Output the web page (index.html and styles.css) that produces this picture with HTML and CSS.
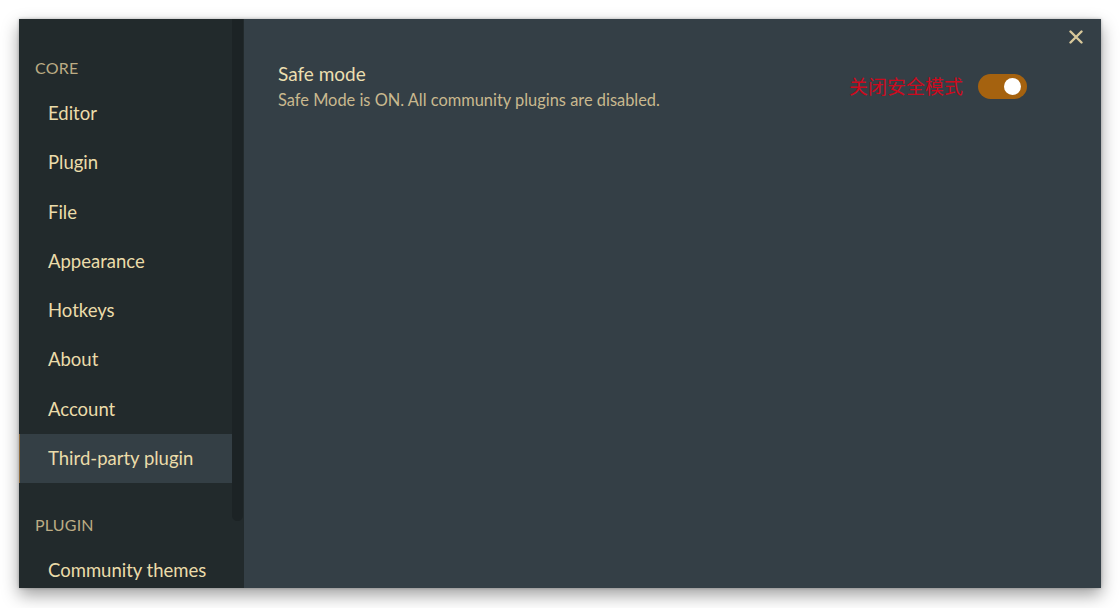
FILE: index.html
```html
<!DOCTYPE html>
<html lang="en">
<head>
<meta charset="utf-8">
<title>Settings</title>
<link rel="stylesheet" href="styles.css">
</head>
<body>
<div class="modal">
  <aside class="sidebar">
    <nav class="nav">
      <div class="nav-heading">CORE</div>
      <div class="nav-item">Editor</div>
      <div class="nav-item">Plugin</div>
      <div class="nav-item">File</div>
      <div class="nav-item">Appearance</div>
      <div class="nav-item">Hotkeys</div>
      <div class="nav-item">About</div>
      <div class="nav-item">Account</div>
      <div class="nav-item is-active">Third-party plugin</div>
      <div class="nav-heading nav-heading-second">PLUGIN</div>
      <div class="nav-item">Community themes</div>
    </nav>
    <div class="scroll-track"><div class="scroll-thumb"></div></div>
  </aside>
  <main class="content">
    <div class="close-row">
      <svg class="close" width="14" height="14" viewBox="0 0 14 14" aria-label="Close">
        <path d="M1.5 1.5 L12.5 12.5 M12.5 1.5 L1.5 12.5" stroke="#d9c99b" stroke-width="2.4" stroke-linecap="round" fill="none"/>
      </svg>
    </div>
    <div class="setting">
      <div class="setting-info">
        <div class="setting-name">Safe mode</div>
        <div class="setting-desc">Safe Mode is ON. All community plugins are disabled.</div>
      </div>
      <div class="setting-control">
        <span class="note">关闭安全模式</span>
        <div class="toggle"><div class="knob"></div></div>
      </div>
    </div>
  </main>
</div>
</body>
</html>
```

FILE: styles.css
```css
html, body {
  margin: 0;
  padding: 0;
  background: #ffffff;
}
body {
  padding: 19px 19px 20px 19px;
  font-family: Lato, "Noto Sans", "Noto Sans CJK SC", sans-serif;
}
.modal {
  width: 1082px;
  height: 569px;
  display: flex;
  overflow: hidden;
  box-shadow: 0 7px 16px rgba(0, 0, 0, 0.38), 0 0 3px rgba(0, 0, 0, 0.25);
}
.sidebar {
  width: 225px;
  flex: none;
  display: flex;
  background: #222a2c;
}
.nav {
  width: 213px;
  flex: none;
  padding-top: 39px;
}
.nav-heading {
  height: 20px;
  line-height: 20px;
  padding-left: 16px;
  margin-bottom: 11px;
  font-size: 16px;
  color: #bcac84;
  letter-spacing: 0.2px;
}
.nav-heading-second {
  margin-top: 32px;
}
.nav-item {
  height: 49.3px;
  line-height: 49px;
  padding-left: 29px;
  font-size: 18.5px;
  color: #ebdcaa;
  box-sizing: border-box;
}
.nav-item.is-active {
  background: #343f45;
  border-left: 1px solid #8d6b3e;
  padding-left: 28px;
}
.scroll-track {
  width: 12px;
  flex: none;
}
.scroll-thumb {
  width: 11px;
  height: 502px;
  background: #1c2325;
  border-radius: 0 0 6px 6px;
}
.content {
  flex: 1;
  background: #343f46;
  padding: 0 74px 0 34px;
}
.close-row {
  display: flex;
  justify-content: flex-end;
  height: 43px;
  padding-top: 11px;
  margin-right: -56px;
  box-sizing: border-box;
}
.close {
  display: block;
}
.setting {
  display: flex;
  justify-content: space-between;
  align-items: center;
}
.setting-name {
  font-size: 19px;
  line-height: 24px;
  color: #ecdfb0;
}
.setting-desc {
  margin-top: 4px;
  font-size: 16.4px;
  line-height: 20px;
  color: #c9b98f;
}
.setting-control {
  display: flex;
  align-items: center;
  gap: 15px;
}
.note {
  font-family: "Noto Sans CJK SC", sans-serif;
  font-size: 19px;
  line-height: 24px;
  color: #cc0a1e;
}
.toggle {
  width: 49px;
  height: 25px;
  border-radius: 13px;
  background: #a5620f;
  display: flex;
  align-items: center;
  justify-content: flex-end;
  padding-right: 6px;
  box-sizing: border-box;
}
.knob {
  width: 17px;
  height: 17px;
  border-radius: 50%;
  background: #ffffff;
}
```
